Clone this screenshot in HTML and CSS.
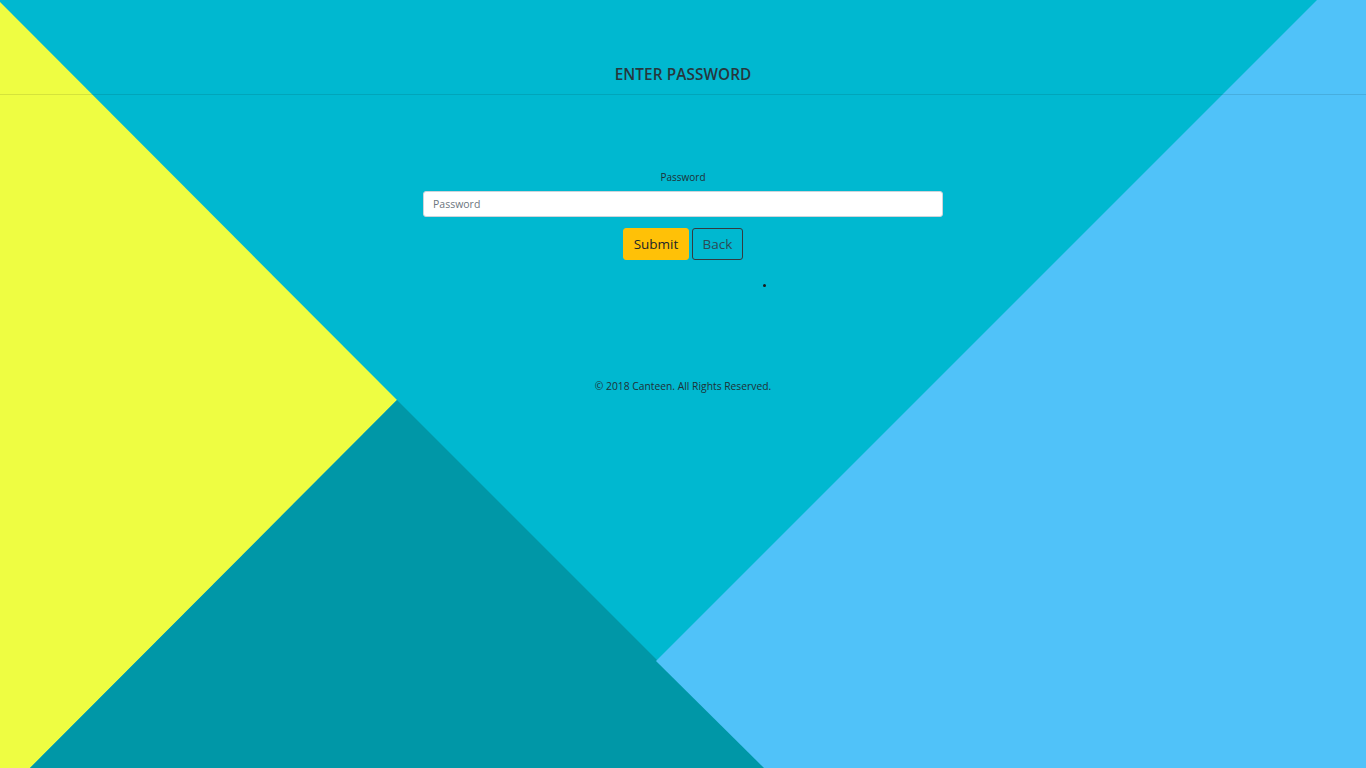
FILE: index.html
```html
<!DOCTYPE html>
<html lang="en">
<head>
<meta charset="utf-8">
<title>Enter Password</title>
<link rel="stylesheet" href="styles.css">
</head>
<body>
<svg class="bg" viewBox="0 0 1366 768" preserveAspectRatio="none" aria-hidden="true">
  <rect x="0" y="0" width="1366" height="768" fill="#00b8d0"/>
  <polygon points="0,2 397,400 30,768 0,768" fill="#eefd42"/>
  <polygon points="397,400 765,768 30,768" fill="#0097a7"/>
  <polygon points="1317,0 1366,0 1366,768 764,768 656,661" fill="#50c2f9"/>
</svg>
<header class="topbar">
  <h1 class="title">ENTER PASSWORD</h1>
</header>
<main class="content">
  <form class="form">
    <label class="label" for="pw">Password</label>
    <input class="input" id="pw" type="password" placeholder="Password">
    <div class="actions">
      <button type="button" class="btn btn-submit">Submit</button>
      <button type="button" class="btn btn-back">Back</button>
    </div>
    <div class="dotrow"><span class="dot"></span></div>
  </form>
  <footer class="footer">© 2018 Canteen. All Rights Reserved.</footer>
</main>
</body>
</html>
```
FILE: styles.css
```css
html, body {
  margin: 0;
  padding: 0;
  height: 100%;
}
body {
  position: relative;
  overflow: hidden;
  font-family: "Open Sans", "Noto Sans", sans-serif;
  color: #1f2d33;
}
.bg {
  position: absolute;
  left: 0;
  top: 0;
  width: 100%;
  height: 100%;
  z-index: 0;
}
.topbar, .content {
  position: relative;
  z-index: 1;
}
.topbar {
  height: 95px;
  border-bottom: 1px solid rgba(0, 0, 0, 0.1);
  box-sizing: border-box;
  display: flex;
  align-items: flex-end;
  justify-content: center;
}
.title {
  margin: 0 0 10px;
  font-size: 15.3px;
  font-weight: 600;
  letter-spacing: 0.1px;
  color: #26373d;
  line-height: 20px;
}
.content {
  display: flex;
  flex-direction: column;
  align-items: center;
  padding-top: 74px;
}
.form {
  display: flex;
  flex-direction: column;
  align-items: center;
  width: 520px;
}
.label {
  font-size: 10px;
  line-height: 16px;
  color: #1f3036;
  margin-bottom: 6px;
}
.input {
  width: 520px;
  height: 26px;
  box-sizing: border-box;
  border: 1px solid #ced4da;
  border-radius: 3px;
  background: #fff;
  padding: 0 9px;
  font-family: inherit;
  font-size: 10.5px;
  color: #495057;
  outline: none;
}
.input::placeholder {
  color: #6c757d;
}
.actions {
  display: flex;
  gap: 3px;
  margin-top: 11px;
}
.btn {
  height: 32px;
  box-sizing: border-box;
  border-radius: 3px;
  font-family: inherit;
  font-size: 13.5px;
  padding: 0 6px;
  cursor: pointer;
}
.btn-submit {
  width: 66px;
  background: #ffc107;
  border: 1px solid #ffc107;
  color: #212529;
}
.btn-back {
  width: 51px;
  background: transparent;
  border: 1px solid #343a40;
  color: #2b4a55;
}
.dotrow {
  width: 100%;
  height: 30px;
  position: relative;
}
.dot {
  position: absolute;
  left: 340px;
  top: 24px;
  width: 3px;
  height: 3px;
  background: #1a1a1a;
  border-radius: 50%;
}
.footer {
  margin-top: 88px;
  font-size: 10.3px;
  line-height: 16px;
  color: #1f3036;
}
```
